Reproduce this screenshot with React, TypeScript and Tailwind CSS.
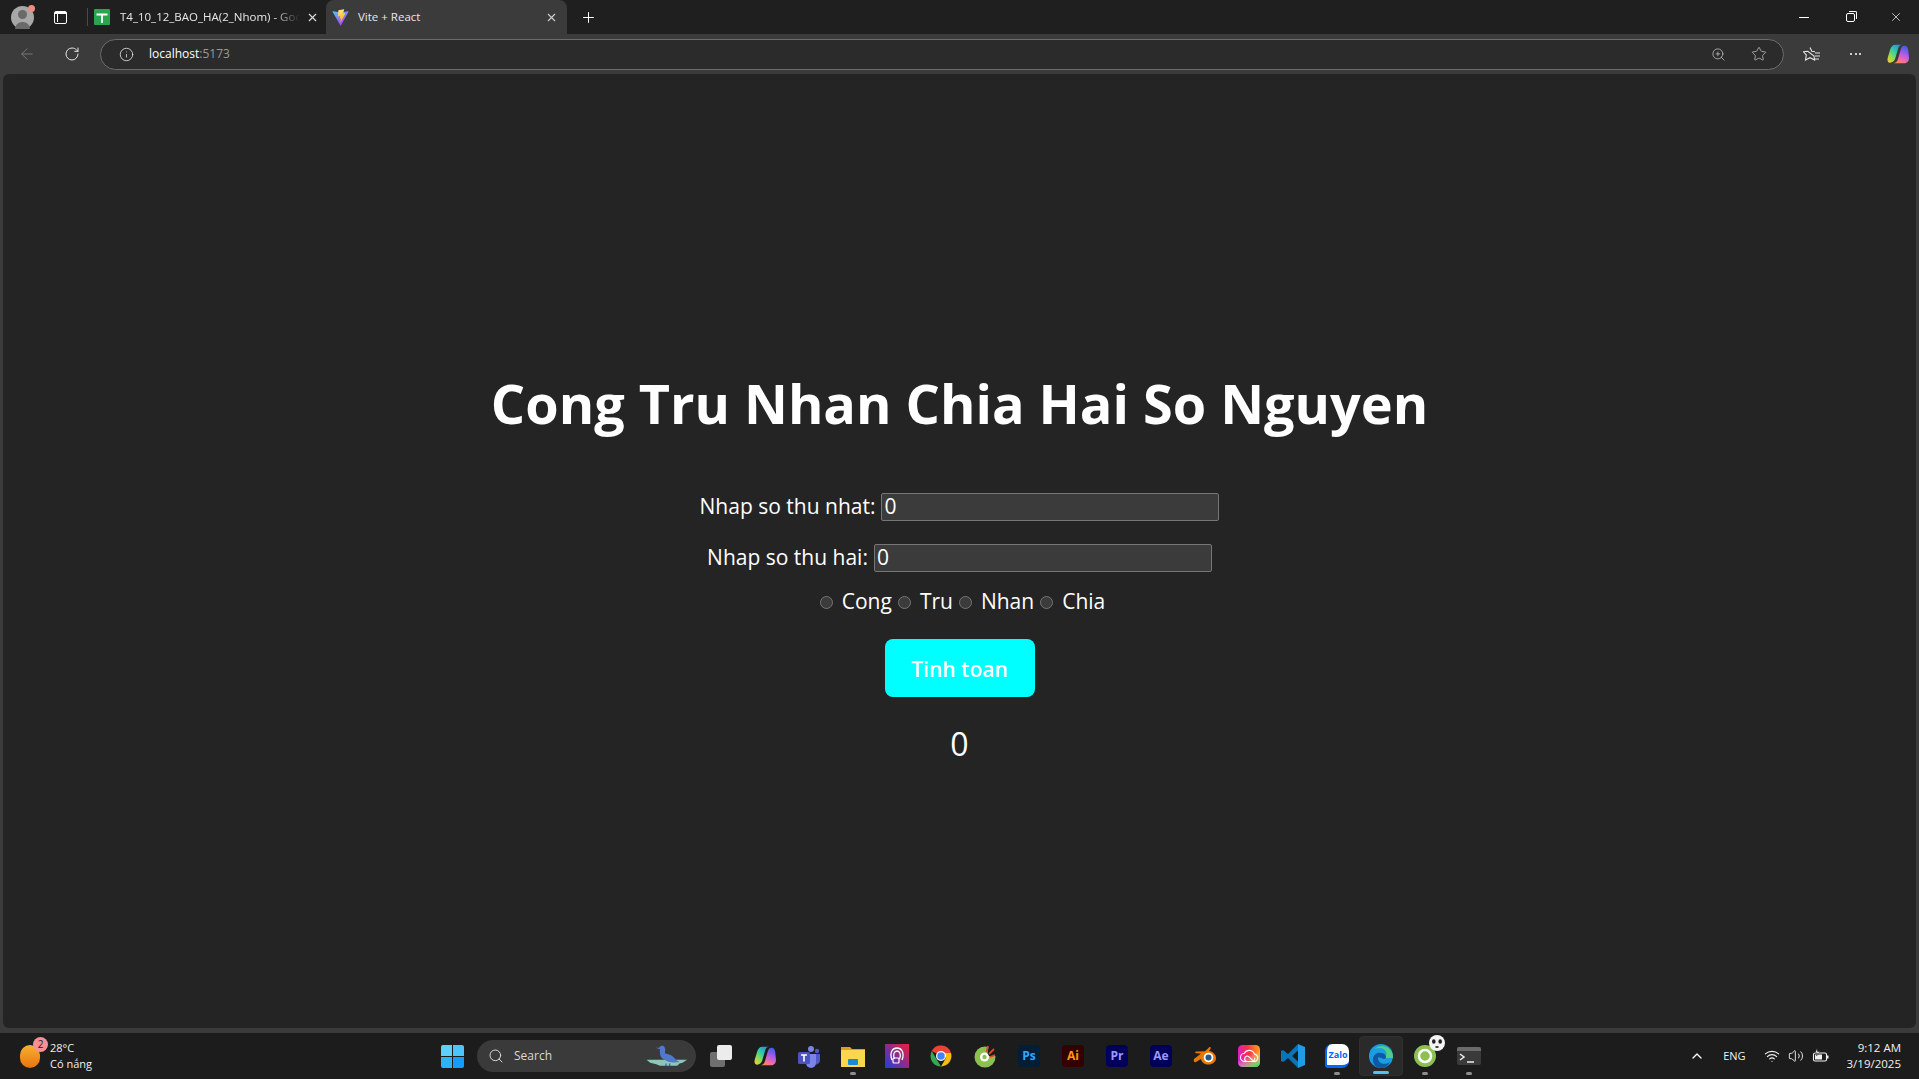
import { ArrowLeft, ChevronUp, Info, Plus, RotateCw, Search, Star, Volume2, Wifi, X, ZoomIn } from "lucide-react";
import type { ReactNode } from "react";

const FONT = "font-['Open_Sans','Noto_Sans',sans-serif]";

function ViteIcon() {
  return (
    <svg viewBox="0 0 410 404" className="h-[17px] w-[17px]">
      <defs>
        <linearGradient id="va" x1="0" y1="0" x2="0.6" y2="1">
          <stop offset="0" stopColor="#41d1ff" />
          <stop offset="1" stopColor="#bd34fe" />
        </linearGradient>
        <linearGradient id="vb" x1="0.4" y1="0" x2="0.5" y2="1">
          <stop offset="0" stopColor="#ffea83" />
          <stop offset="1" stopColor="#ffa800" />
        </linearGradient>
      </defs>
      <path fill="url(#va)" d="M399 63 217 387c-4 7-14 7-18 0L14 63c-4-7 2-16 10-14l182 33h5l178-33c8-1 14 7 10 14Z" />
      <path fill="url(#vb)" d="M292 1 157 28c-2 0-4 2-4 4l-8 140c0 3 3 6 6 5l38-9c3-1 6 2 6 6l-11 55c-1 4 2 6 6 5l23-7c4-1 7 2 6 6l-18 86c-1 5 6 8 9 3l2-3 107-214c2-4-1-8-5-7l-39 8c-4 1-7-3-6-6l25-89c1-4-2-8-6-7Z" />
    </svg>
  );
}

function SheetsIcon() {
  return (
    <div className="flex h-4 w-4 items-center justify-center rounded-[1px] bg-[#2aa44f]">
      <svg viewBox="0 0 16 16" className="h-4 w-4">
        <path d="M2.500 5.500h11M8 5.500V14" stroke="#fff" strokeWidth="1.800" fill="none" />
      </svg>
    </div>
  );
}

function CopilotIcon({ id, size = 22 }: { id: string; size?: number }) {
  return (
    <svg viewBox="0 0 24 24" width={size} height={size}>
      <defs>
        <linearGradient id={`${id}a`} x1="0.9" y1="0" x2="0.1" y2="1">
          <stop offset="0" stopColor="#1b86e8" />
          <stop offset="0.45" stopColor="#36cfa0" />
          <stop offset="0.75" stopColor="#9bdc4a" />
          <stop offset="1" stopColor="#f7c92f" />
        </linearGradient>
        <linearGradient id={`${id}b`} x1="0.7" y1="0" x2="0.3" y2="1">
          <stop offset="0" stopColor="#3b5fe8" />
          <stop offset="0.45" stopColor="#b45be8" />
          <stop offset="0.8" stopColor="#f56f9e" />
          <stop offset="1" stopColor="#fb8a4a" />
        </linearGradient>
      </defs>
      <path fill={`url(#${id}a)`} d="M9 2h8c-3 0-4 1.500-5 4.500L9 17c-1 3-3 4.500-5.500 4.500C1 21.500 0 19 .8 16l2.700-9C4.500 4 6.500 2 9 2Z" />
      <path fill={`url(#${id}b)`} d="M15 22H7c3 0 4-1.500 5-4.500L15 7c1-3 2-4 4-4 3 0 4 2.500 4.200 5l.8 8c0 3.500-2 6-5 6Z" />
    </svg>
  );
}

function TaskIcon({ children, dot, active }: { children: ReactNode; dot?: boolean; active?: boolean }) {
  return (
    <div className={`relative flex h-[40px] w-[44px] items-center justify-center rounded-[4px] ${active ? "border border-[#303030] bg-[#2a2a2a]" : ""}`}>
      {children}
      {dot && <div className="absolute bottom-[1px] h-[3px] w-[6px] rounded-full bg-[#8e8e8e]" />}
      {active && <div className="absolute bottom-[1px] h-[3px] w-[16px] rounded-full bg-[#4fc3f7]" />}
    </div>
  );
}

function AdobeIcon({ label, bg, color }: { label: string; bg: string; color: string }) {
  return (
    <div className={`flex h-[22px] w-[22px] items-center justify-center rounded-[4px] text-[12px] font-bold ${bg} ${color}`}>{label}</div>
  );
}

function TaskIcons() {
  return (
    <div className="flex items-center">
      <TaskIcon>
        <div className="relative h-[22px] w-[22px]">
          <div className="absolute bottom-0 left-0 h-[15px] w-[15px] rounded-[2px] bg-[#6f6f6f]" />
          <div className="absolute right-0 top-0 h-[15px] w-[15px] rounded-[2px] bg-[#ececec]" />
        </div>
      </TaskIcon>
      <TaskIcon>
        <CopilotIcon id="ct" />
      </TaskIcon>
      <TaskIcon>
        <svg viewBox="0 0 24 24" className="h-[24px] w-[24px]">
          <circle cx="14" cy="5" r="3" fill="#7b83eb" />
          <circle cx="20" cy="7" r="2.200" fill="#5059c9" />
          <path d="M16 10h7v7a4 4 0 0 1-7 2Z" fill="#5059c9" />
          <path d="M9 10h10v9a4.500 4.500 0 0 1-10 0Z" fill="#7b83eb" />
          <rect x="1" y="8" width="12" height="12" rx="1.500" fill="#4b53bc" />
          <path d="M4 11h6M7 11v6.500" stroke="#fff" strokeWidth="1.600" />
        </svg>
      </TaskIcon>
      <TaskIcon dot>
        <svg viewBox="0 0 24 24" className="h-[24px] w-[24px]">
          <path d="M0 3h9l2 2h13v3H0Z" fill="#d9a21a" />
          <path d="M0 6h24v17H0Z" fill="#fbd64f" />
          <rect x="7" y="15" width="10" height="6" rx="1" fill="#1a8ad0" />
        </svg>
      </TaskIcon>
      <TaskIcon>
        <svg viewBox="0 0 24 24" className="h-[24px] w-[24px]">
          <defs>
            <linearGradient id="pa" x1="0" y1="1" x2="1" y2="0">
              <stop offset="0" stopColor="#1c3fe0" />
              <stop offset="1" stopColor="#f21d38" />
            </linearGradient>
          </defs>
          <rect width="24" height="24" fill="url(#pa)" />
          <path d="M7 16c-3-8 1-12 5-12s8 4 5 12M9.500 15c-2-5 0-8 2.500-8s4.500 3 2.500 8" stroke="#fff" strokeWidth="1.300" fill="none" />
          <rect x="8" y="14" width="6" height="5" rx="1" stroke="#fff" strokeWidth="1.200" fill="none" />
        </svg>
      </TaskIcon>
      <TaskIcon>
        <svg viewBox="0 0 48 48" className="h-[24px] w-[24px]">
          <path d="M24 24 5.500 14A21 21 0 0 1 44 18H24Z" fill="#ea4335" />
          <path d="M24 45A21 21 0 0 1 5.500 14L16 32Z" fill="#34a853" />
          <path d="M24 45l10.500-18L24 18h20a21 21 0 0 1-20 27Z" fill="#fbbc05" />
          <circle cx="24" cy="24" r="10" fill="#fff" />
          <circle cx="24" cy="24" r="7.500" fill="#4285f4" />
        </svg>
      </TaskIcon>
      <TaskIcon>
        <svg viewBox="0 0 24 24" className="h-[24px] w-[24px]">
          <circle cx="12" cy="13" r="10.500" fill="#8cc152" />
          <path d="M16 0h8v12H14Z" fill="#1c1c1c" />
          <circle cx="11.500" cy="13" r="4.500" fill="#fff" />
          <circle cx="11.500" cy="13" r="2.200" fill="#8cc152" />
          <path d="M13.500 8 15 2M16 10l5-5M17 13l5-2" stroke="#e8412c" strokeWidth="1.800" />
        </svg>
      </TaskIcon>
      <TaskIcon>
        <AdobeIcon label="Ps" bg="bg-[#001e36]" color="text-[#31a8ff]" />
      </TaskIcon>
      <TaskIcon>
        <AdobeIcon label="Ai" bg="bg-[#330000]" color="text-[#ff9a00]" />
      </TaskIcon>
      <TaskIcon>
        <AdobeIcon label="Pr" bg="bg-[#00005b]" color="text-[#9999ff]" />
      </TaskIcon>
      <TaskIcon>
        <AdobeIcon label="Ae" bg="bg-[#00005b]" color="text-[#9999ff]" />
      </TaskIcon>
      <TaskIcon>
        <svg viewBox="0 0 24 24" className="h-[24px] w-[24px]">
          <path d="M1 15 8 9.500 3 9.300c-1-.3-1-1.600 0-1.800l9-.3 4-3.700c1-1 2.500 0 1.500 1.300L16 7c4 .5 7 3.500 7 7 0 4-3.500 6.500-7.500 6.500-4 0-7-2-7.500-5.500L3 18c-1.500 1-3-1-2-3Z" fill="#ea7600" />
          <circle cx="15.500" cy="13.500" r="4.800" fill="#fff" />
          <circle cx="15.500" cy="13.500" r="3" fill="#265787" />
        </svg>
      </TaskIcon>
      <TaskIcon>
        <svg viewBox="0 0 24 24" className="h-[22px] w-[22px]">
          <defs>
            <linearGradient id="cc" x1="0" y1="0.6" x2="1" y2="0.4">
              <stop offset="0" stopColor="#d81fd0" />
              <stop offset="0.5" stopColor="#f8304a" />
              <stop offset="1" stopColor="#ff9a1a" />
            </linearGradient>
            <linearGradient id="cd" x1="0.3" y1="0" x2="0.8" y2="1">
              <stop offset="0.45" stopColor="#ffffff" stopOpacity="0" />
              <stop offset="1" stopColor="#3fdc5a" />
            </linearGradient>
          </defs>
          <rect width="24" height="24" rx="5" fill="url(#cc)" />
          <rect width="24" height="24" rx="5" fill="url(#cd)" />
          <path d="M7.500 18a4.500 4.500 0 0 1-.5-9 6 6 0 0 1 11 1 4 4 0 0 1-1 8ZM9 18c-4-3 0-8 3-5l3 3c2 2 4 0 3-2" stroke="#fff" strokeWidth="1.200" fill="none" />
        </svg>
      </TaskIcon>
      <TaskIcon>
        <svg viewBox="0 0 24 24" className="h-[24px] w-[24px]">
          <path d="M17 0 7 10 2 6 0 7v10l2 1 5-4 10 10Zm0 6.500v11L11 12Z" fill="#0a74b8" />
          <path d="M17 0l7 3v18l-7 3Z" fill="#1f9ce4" />
        </svg>
      </TaskIcon>
      <TaskIcon dot>
        <div className="flex h-[24px] w-[24px] items-center justify-center rounded-[7px] rounded-bl-[3px] border-b-[3px] border-l-[2px] border-[#0068ff] bg-white text-[9px] font-bold text-[#0068ff]">Zalo</div>
      </TaskIcon>
      <TaskIcon active>
        <svg viewBox="0 0 24 24" className="h-[24px] w-[24px]">
          <circle cx="12" cy="12" r="12" fill="#1b9de2" />
          <path d="M24 13C24 6 18 2 13 2 8 2 6 5 6 5c4-2 10-1 11 3 1 2 0 4-1 6h8Z" fill="#51cf7a" />
          <path d="M9 14c0 5 6 8 12 4-2 4-5 6-9 6-5 0-9-4-8-10 1-4 5-6 8-5 3 0 5 2 5 4 0 1-1 2-2 2-3-1-6-3-6-1Z" fill="#0c59a4" />
        </svg>
      </TaskIcon>
      <TaskIcon dot>
        <div className="relative">
          <svg viewBox="0 0 24 24" className="h-[24px] w-[24px]">
            <circle cx="12" cy="12" r="11" fill="#8cc152" />
            <circle cx="12" cy="12" r="6" fill="none" stroke="#fff" strokeWidth="2.500" />
          </svg>
          <svg viewBox="0 0 16 16" className="absolute -right-[8px] -top-[9px] h-[16px] w-[16px]">
            <circle cx="8" cy="8" r="8" fill="#f4f4f4" />
            <ellipse cx="4.800" cy="6.500" rx="1.800" ry="2.200" fill="#222" />
            <ellipse cx="11.200" cy="6.500" rx="1.800" ry="2.200" fill="#222" />
            <path d="M6.500 11h3v2h-3Z" fill="#444" />
          </svg>
        </div>
      </TaskIcon>
      <TaskIcon dot>
        <div className="h-[18px] w-[24px] rounded-[2px] bg-[#3a3a3a]">
          <div className="h-[4px] rounded-t-[2px] bg-[#6b6b6b]" />
          <svg viewBox="0 0 24 14" className="h-[14px] w-[24px]">
            <path d="m3 3 4 3-4 3" stroke="#eee" strokeWidth="1.500" fill="none" />
            <path d="M10 11h7" stroke="#eee" strokeWidth="1.500" />
          </svg>
        </div>
      </TaskIcon>
    </div>
  );
}

function TabStrip() {
  return (
    <div className="flex h-[34px] items-stretch bg-[#1f1f1f] text-[11.500px] text-[#e8e8e8]">
      <div className="flex w-[44px] items-center justify-center">
        <div className="relative flex h-[23px] w-[23px] items-end justify-center overflow-visible rounded-full bg-[#a8a8a8]">
          <div className="absolute top-[4px] h-[9px] w-[9px] rounded-full bg-[#6a6a6a]" />
          <div className="h-[7px] w-[15px] rounded-t-full bg-[#6a6a6a]" />
          <div className="absolute -right-[1px] -top-[1px] h-[7px] w-[7px] rounded-full bg-[#f28b82]" />
        </div>
      </div>
      <div className="flex w-[33px] items-center justify-center">
        <div className="h-[13px] w-[13px] rounded-[2px] border-[1.500px] border-white">
          <div className="h-[2px] bg-white" />
          <div className="h-[8px] w-[3px] border-r border-white" />
        </div>
      </div>
      <div className="my-[8px] ml-[10px] w-px bg-[#4a4a4a]" />
      <div className="flex w-[238px] items-center pl-[6px] pr-[7px]">
        <SheetsIcon />
        <span className="ml-[10px] w-[180px] overflow-hidden whitespace-nowrap [mask-image:linear-gradient(90deg,#000_85%,transparent)]">T4_10_12_BAO_HA(2_Nhom) - Google</span>
        <X size={13} className="ml-auto text-[#e0e0e0]" />
      </div>
      <div className="flex w-[241px] items-center rounded-t-[8px] bg-[#3b3b3b] pl-[6px] pr-[9px]">
        <ViteIcon />
        <span className="ml-[9px]">Vite + React</span>
        <X size={13} className="ml-auto text-[#d0d0d0]" />
      </div>
      <div className="flex w-[42px] items-center justify-center">
        <Plus size={17} strokeWidth={1.400} className="text-white" />
      </div>
      <div className="ml-auto flex items-center text-white">
        <div className="flex w-[46px] justify-center">
          <div className="h-px w-[10px] bg-white" />
        </div>
        <div className="flex w-[46px] justify-center">
          <div className="relative h-[9px] w-[9px] rounded-[2px] border border-white">
            <div className="absolute -right-[3px] -top-[3px] h-[8px] w-[8px] rounded-tr-[2px] border-r border-t border-white" />
          </div>
        </div>
        <div className="flex w-[46px] justify-center">
          <X size={14} strokeWidth={1.200} />
        </div>
      </div>
    </div>
  );
}

function Toolbar() {
  return (
    <div className="flex h-[40px] items-center bg-[#3b3b3b] text-[#e6e6e6]">
      <div className="flex w-[54px] justify-center">
        <ArrowLeft size={18} strokeWidth={1.200} className="text-[#7d7d7d]" />
      </div>
      <div className="flex w-[36px] justify-center">
        <RotateCw size={16} strokeWidth={1.500} />
      </div>
      <div className="ml-[10px] flex h-[31px] w-[1684px] items-center rounded-full border border-[#6c6c6c] bg-[#2b2b2b] pl-[18px] pr-[16px]">
        <Info size={15} strokeWidth={1.300} />
        <span className="ml-[15px] text-[12px] text-white">
          localhost<span className="text-[#9a9a9a]">:5173</span>
        </span>
        <ZoomIn size={15} strokeWidth={1.300} className="ml-auto text-[#bdbdbd]" />
        <Star size={16} strokeWidth={1.200} className="ml-[25px] text-[#bdbdbd]" />
      </div>
      <div className="ml-[19px] flex w-[18px] justify-center">
        <svg viewBox="0 0 18 18" className="h-[18px] w-[18px]" fill="none" stroke="currentColor" strokeWidth="1.100">
          <path d="M7 2.500 8.800 6.300l3.200.4M11 11l.6 4-4.600-2.300L2.500 15l.8-5L.5 6.800l4.300-.5Z" />
          <path d="M12 8h5M12 11h5M12 14h4" />
        </svg>
      </div>
      <div className="ml-[29px] flex gap-[2.500px]">
        <div className="h-[2px] w-[2px] rounded-full bg-white" />
        <div className="h-[2px] w-[2px] rounded-full bg-white" />
        <div className="h-[2px] w-[2px] rounded-full bg-white" />
      </div>
      <div className="ml-[26px]">
        <CopilotIcon id="cb" />
      </div>
    </div>
  );
}

function Calculator() {
  return (
    <div className="flex flex-1 flex-col items-center justify-center rounded-[6px] bg-[#242424] pt-[31px] text-white">
      <h1 className="mb-[56px] text-[54px] leading-[67px] font-bold">Cong Tru Nhan Chia Hai So Nguyen</h1>
      <div className="flex h-[28px] items-center text-[21px]">
        <label>Nhap so thu nhat:</label>
        <input readOnly value="0" className="ml-[6px] h-[28px] w-[338px] rounded-[2px] border border-[#767676] bg-[#3b3b3b] px-[2px] text-[21px] text-white" />
      </div>
      <div className="mt-[23px] flex h-[28px] items-center text-[21px]">
        <label>Nhap so thu hai:</label>
        <input readOnly value="0" className="ml-[6px] h-[28px] w-[338px] rounded-[2px] border border-[#767676] bg-[#3b3b3b] px-[2px] text-[21px] text-white" />
      </div>
      <div className="mt-[15px] flex h-[30px] items-center text-[21px]">
        {["Cong", "Tru", "Nhan", "Chia"].map((op) => (
          <label key={op} className="flex items-center">
            <span className="ml-[6px] mr-[9px] h-[13px] w-[13px] rounded-full border border-[#767676] bg-[#3b3b3b]" />
            {op}
          </label>
        ))}
      </div>
      <button className="mt-[22px] h-[58px] w-[150px] rounded-[8px] bg-[#00ffff] pt-[3px] text-[21px] font-semibold text-white">Tinh toan</button>
      <div className="mt-[28px] text-[32px] leading-[38px]">0</div>
    </div>
  );
}

function Taskbar() {
  return (
    <div className="relative flex h-[46px] items-center bg-[#1c1c1c] text-[12px] leading-[16px] text-[#f0f0f0]">
      <div className="flex w-[436px] items-center pl-[20px]">
        <div className="relative">
          <div className="h-[23px] w-[20px] rounded-full bg-gradient-to-b from-[#f5b130] to-[#e8730c]" />
          <div className="absolute -right-[8px] -top-[8px] flex h-[15px] w-[15px] items-center justify-center rounded-full bg-[#f78f96] text-[10px] text-[#222]">2</div>
        </div>
        <div className="ml-[10px] text-[11px]">
          <div>28°C</div>
          <div>Có nắng</div>
        </div>
      </div>
      <div className="flex w-[41px] items-center pl-[5px]">
        <div className="grid h-[23px] w-[23px] shrink-0 grid-cols-2 gap-[1px]">
          <div className="rounded-tl-[2px] bg-[#5cd2fb]" />
          <div className="rounded-tr-[2px] bg-[#4cc5fa]" />
          <div className="rounded-bl-[2px] bg-[#2cb2fb]" />
          <div className="rounded-br-[2px] bg-[#149df8]" />
        </div>
      </div>
      <div className="relative flex h-[32px] w-[219px] items-center rounded-full bg-[#3a3a3a] pl-[11px] text-[#d8d8d8]">
        <Search size={16} strokeWidth={1.500} />
        <span className="ml-[10px]">Search</span>
        <svg viewBox="0 0 60 40" className="absolute right-[6px] top-[1px] h-[30px] w-[45px]">
          <path d="M2 25h54l-6 4-4 1-3 3H20l-5-2-8-2Z" fill="#8cc7b8" />
          <path d="M14 9h5c1-3 5-4 7-1 2 3 0 6 1 9 5 0 11 3 14 8l5 3c-6 1-14 1-18-2-7-2-9-8-8-15l-6-2Z" fill="#4f79c9" />
          <path d="M28 30v7M33 30v7" stroke="#2d3f66" strokeWidth="1.200" />
        </svg>
      </div>
      <div className="ml-[3px]">
        <TaskIcons />
      </div>
      <div className="absolute right-0 top-0 flex h-[46px] items-center">
        <ChevronUp size={16} strokeWidth={2} className="text-white" />
        <span className="ml-[18px] text-[11px]">ENG</span>
        <Wifi size={16} className="ml-[18px]" strokeWidth={1.700} />
        <Volume2 size={16} className="ml-[8px]" strokeWidth={1.400} />
        <svg viewBox="0 0 18 16" className="ml-[8px] h-[16px] w-[18px]" fill="none" stroke="currentColor" strokeWidth="1.100">
          <rect x="1.500" y="5" width="13" height="8" rx="1.500" />
          <path d="M3 6.500h7v5H3Z" fill="currentColor" stroke="none" />
          <path d="M15 7.500h1.500v3H15Z" fill="currentColor" stroke="none" />
          <path d="M5 .5 3 5h2.500L4.500 8 8 3.500H5.500Z" fill="currentColor" stroke="#1c1c1c" strokeWidth="0.500" />
        </svg>
        <div className="ml-[17px] mr-[18px] text-right text-[11.500px]">
          <div>9:12 AM</div>
          <div>3/19/2025</div>
        </div>
      </div>
    </div>
  );
}

export default function App() {
  return (
    <div className={`flex h-[1079px] w-[1919px] flex-col overflow-hidden bg-[#3b3b3b] ${FONT}`}>
      <TabStrip />
      <Toolbar />
      <div className="flex flex-1 px-[3px] pb-[5px]">
        <Calculator />
      </div>
      <Taskbar />
    </div>
  );
}
